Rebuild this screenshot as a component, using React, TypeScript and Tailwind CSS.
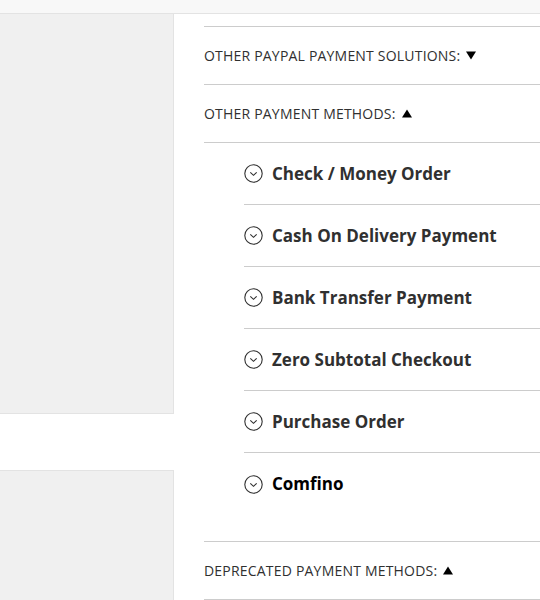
import React from "react";

const font = { fontFamily: '"Open Sans", "Noto Sans", sans-serif' };

function Tri({ up }: { up?: boolean }) {
  return (
    <svg width="10" height="9" viewBox="0 0 10 9" className="ml-[6px] inline-block">
      {up ? <polygon points="0,8.5 10,8.5 5,0.5" fill="#000" /> : <polygon points="0,0.5 10,0.5 5,8.5" fill="#000" />}
    </svg>
  );
}

function CircleChevron() {
  return (
    <svg width="19" height="19" viewBox="0 0 19 19" className="shrink-0">
      <circle cx="9.5" cy="9.5" r="8.7" fill="none" stroke="#303030" strokeWidth="1.1" />
      <polyline points="6.3,8.3 9.5,11.3 12.7,8.3" fill="none" stroke="#303030" strokeWidth="1.1" />
    </svg>
  );
}

function Header({ label, up }: { label: string; up?: boolean }) {
  return (
    <div className="h-[58px] flex items-center text-[14px] tracking-[0.2px] text-[#303030] border-b border-[#cccccc]">
      <span>{label}</span>
      <Tri up={up} />
    </div>
  );
}

const items = [
  "Check / Money Order",
  "Cash On Delivery Payment",
  "Bank Transfer Payment",
  "Zero Subtotal Checkout",
  "Purchase Order",
  "Comfino",
];

export default function App() {
  return (
    <div className="w-[540px] h-[600px] overflow-hidden bg-white" style={font}>
      <div className="h-[14px] bg-[#f8f8f8] border-b border-[#e3e3e3]" />
      <div className="flex">
        <div className="w-[174px] shrink-0 flex flex-col">
          <div className="h-[400px] bg-[#f0f0f0] border-r border-b border-[#e3e3e3]" />
          <div className="h-[56px]" />
          <div className="h-[200px] bg-[#f0f0f0] border-r border-t border-[#e3e3e3]" />
        </div>
        <div className="flex-1 pl-[30px] pt-[12px]">
          <div className="border-t border-[#cccccc]">
            <Header label="OTHER PAYPAL PAYMENT SOLUTIONS:" />
            <Header label="OTHER PAYMENT METHODS:" up />
            <div className="pl-[40px] pb-[26px] border-b border-[#cccccc]">
              {items.map((it, i) => (
                <div
                  key={it}
                  className={
                    "h-[62px] flex items-center gap-[9px] " +
                    (i < items.length - 1 ? "border-b border-[#cccccc]" : "")
                  }
                >
                  <CircleChevron />
                  <span
                    className={
                      "text-[17px] font-bold " +
                      (it === "Comfino" ? "text-black" : "text-[#303030]")
                    }
                  >
                    {it}
                  </span>
                </div>
              ))}
            </div>
            <Header label="DEPRECATED PAYMENT METHODS:" up />
          </div>
        </div>
      </div>
    </div>
  );
}
